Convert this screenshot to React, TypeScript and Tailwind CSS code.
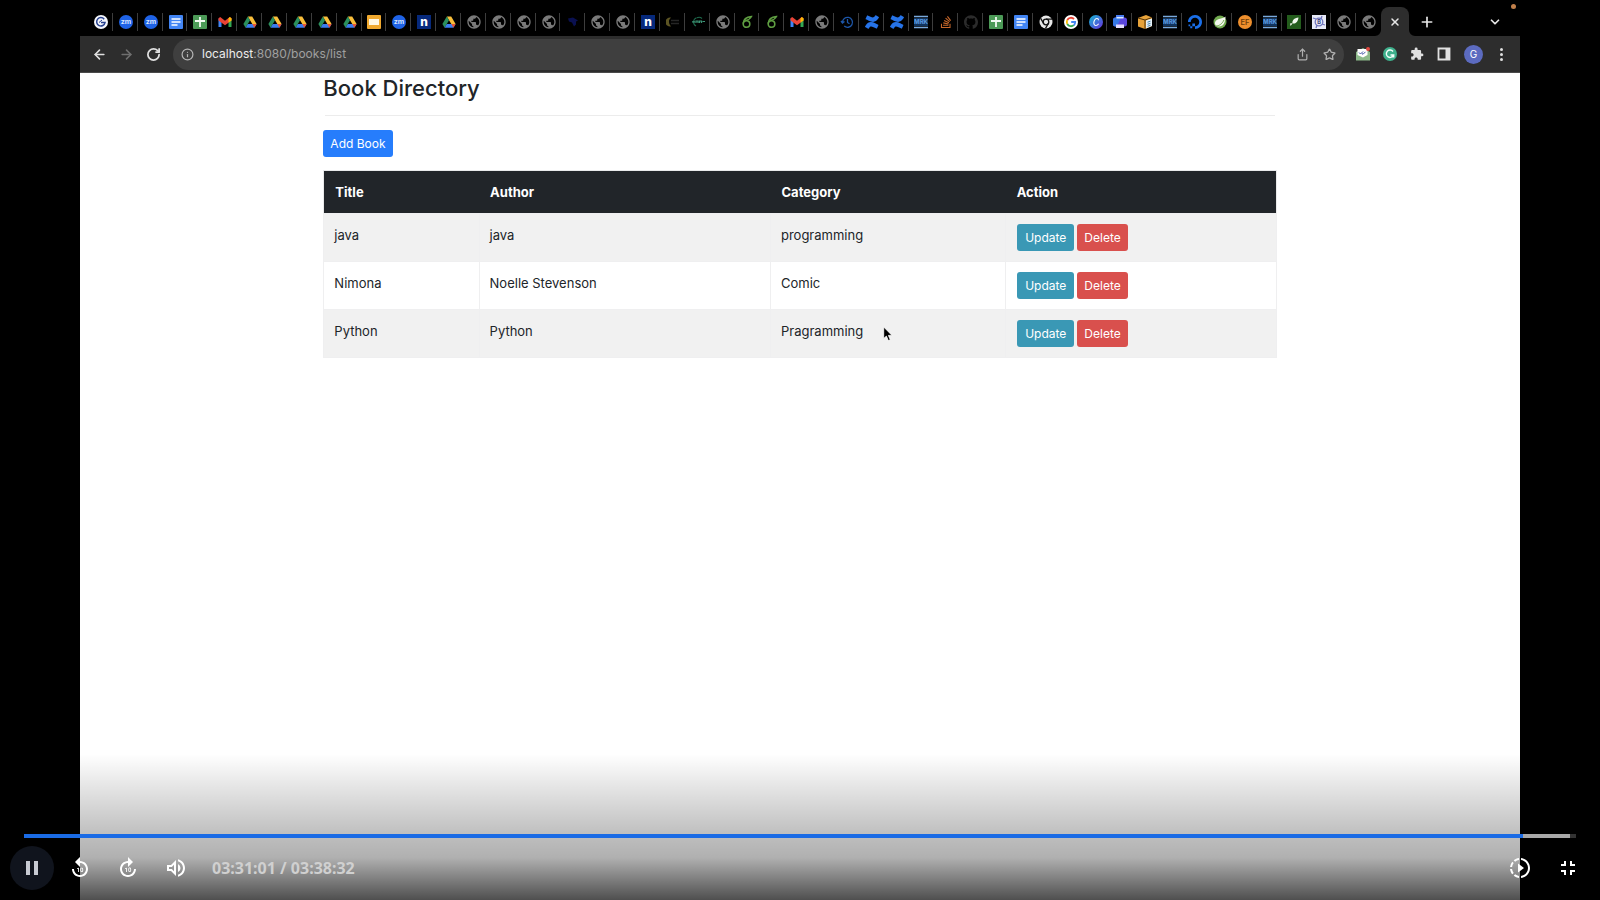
import type { ReactNode } from "react";
import {
  MdExtension,
  MdForward10,
  MdFullscreenExit,
  MdOutlineVolumeUp,
  MdPause,
  MdPublic,
  MdReplay10,
  MdSlowMotionVideo,
} from "react-icons/md";
import {
  ArrowLeft,
  ArrowRight,
  ChevronDown,
  Info,
  Plus,
  RotateCw,
  Share,
  Star,
  X,
} from "lucide-react";
import { SiConfluence, SiGithub, SiStackoverflow, SiDigitalocean } from "react-icons/si";

const glyphText = { fontFamily: "Inter, sans-serif" };

function Svg({ children }: { children: ReactNode }) {
  return (
    <svg viewBox="0 0 14 14" className="size-3.5" aria-hidden="true">
      {children}
    </svg>
  );
}

const icons: Record<string, ReactNode> = {
  grammar: (
    <Svg>
      <circle cx="7" cy="7" r="7" fill="#f4f6fb" />
      <path d="M10.2 4.2A4.2 4.2 0 1 0 11 7.6H7" fill="none" stroke="#27408f" strokeWidth="1.5" />
      <path d="M5 7.5L8 5" stroke="#27408f" strokeWidth="1" />
    </Svg>
  ),
  zoom: (
    <Svg>
      <circle cx="7" cy="7" r="7" fill="#1f63e6" />
      <text x="7" y="9.3" textAnchor="middle" fontSize="7" fontWeight="700" fill="#d9e6ff" style={glyphText}>zm</text>
    </Svg>
  ),
  docs: (
    <Svg>
      <rect width="14" height="14" rx="1" fill="#4285f4" />
      <path d="M2.5 4h9M2.5 7h9M2.5 10h6" stroke="#fff" strokeWidth="1.5" />
    </Svg>
  ),
  sheets: (
    <Svg>
      <rect width="14" height="14" rx="1" fill="#4c9a57" />
      <path d="M7 2v10M2 6h10" stroke="#f2faf2" strokeWidth="1.8" />
    </Svg>
  ),
  gmail: (
    <Svg>
      <path d="M.5 3.500v8.500h3V5.500z" fill="#4285f4" />
      <path d="M13.500 3.500v8.500h-3V5.500z" fill="#34a853" />
      <path d="M.5 3.200L2.200 2 7 5.800 11.800 2l1.700 1.200v2.400L7 10.200.5 5.600z" fill="#ea4335" />
      <path d="M10.500 3.200L11.800 2l1.700 1.200v2.400l-3 2z" fill="#fbbc04" />
    </Svg>
  ),
  drive: (
    <Svg>
      <path d="M4.8 1.5h4.4l4.400 7.600H9.300z" fill="#f9bf3b" />
      <path d="M4.800 1.500L.4 9.100l2.200 3.600L7 5.200z" fill="#2b8f5c" />
      <path d="M2.600 12.700l2.200-3.600h8.800l-2.200 3.600z" fill="#3b7df0" />
      <path d="M9.300 9.100h4.300l-2.200 3.600z" fill="#ea5335" />
    </Svg>
  ),
  slides: (
    <Svg>
      <rect width="14" height="14" rx="1" fill="#f0a92f" />
      <rect x="2" y="4" width="10" height="6" fill="#fff8e4" />
    </Svg>
  ),
  n: (
    <Svg>
      <rect width="14" height="14" fill="#06297c" />
      <text x="7" y="11" textAnchor="middle" fontSize="12" fontWeight="800" fill="#fff" style={glyphText}>n</text>
    </Svg>
  ),
  globe: <MdPublic className="size-4 text-[#7a7a7a]" />,
  navy: (
    <Svg>
      <path d="M2 3.500l5-1 5 3-2 1v3l-2 2-2-4-3-1z" fill="#0a1050" />
    </Svg>
  ),
  moon: (
    <Svg>
      <path d="M5 2.500a4.600 4.600 0 1 0 0 9 6 6 0 0 1 0-9z" fill="#5c5423" />
      <path d="M5 5.500h8M5 8.500h8" stroke="#262626" strokeWidth="1.500" />
    </Svg>
  ),
  teal: (
    <Svg>
      <path d="M5.500 2.800A4.500 4.500 0 0 0 5 11M11 3.500A4.500 4.500 0 0 0 6 2.700" fill="none" stroke="#1e6a4c" strokeWidth="1.100" />
      <path d="M1 6.800h3M5 8V6h2v2M8.500 8V6h2v2M11.500 6.500H14" fill="none" stroke="#3d9576" strokeWidth="1.200" />
    </Svg>
  ),
  six: (
    <Svg>
      <circle cx="6.500" cy="9" r="3.300" fill="none" stroke="#5f9f42" strokeWidth="1.600" />
      <path d="M3.200 8.500C3.300 5 6 2 11.500 1.500 10 4.500 8 5 5.500 5.500" fill="none" stroke="#5f9f42" strokeWidth="1.400" />
    </Svg>
  ),
  history: (
    <Svg>
      <path d="M1 6l1.500 2L4.500 6.500M2.500 7.500a5 5 0 1 1 1.700 3.600M7.500 4v3.500l2 1.300" fill="none" stroke="#1d56a8" strokeWidth="1.300" />
    </Svg>
  ),
  confluence: <SiConfluence className="size-3.5 text-[#2673e8]" />,
  mdn: (
    <Svg>
      <path d="M0 1.500h14M0 12.500h14" stroke="#79a9dc" strokeWidth="1.500" />
      <rect y="3" width="14" height="8" fill="#10345f" />
      <text x="7" y="9.200" textAnchor="middle" fontSize="6" fontWeight="800" fill="#5795dc" style={glyphText}>MRK</text>
    </Svg>
  ),
  stack: <SiStackoverflow className="size-3 text-[#c9682b]" />,
  github: <SiGithub className="size-3.5 text-[#2b2b2b]" />,
  chrome: (
    <Svg>
      <circle cx="7" cy="7" r="6.500" fill="#e8e8e8" />
      <circle cx="7" cy="7" r="2.800" fill="#e8e8e8" stroke="#111" strokeWidth="1.300" />
      <path d="M7 4.200h6M4.600 8.400L1.700 3.400M9.400 8.400L6.500 13.400" stroke="#111" strokeWidth="1.300" />
    </Svg>
  ),
  google: (
    <Svg>
      <circle cx="7" cy="7" r="7" fill="#fff" />
      <g fill="none" strokeWidth="1.800">
        <path d="M10 4A4.200 4.200 0 0 0 3.300 5" stroke="#ea4335" />
        <path d="M3.300 5a4.200 4.200 0 0 0 0 4" stroke="#fbbc04" />
        <path d="M3.300 9a4.200 4.200 0 0 0 6.500 1.200" stroke="#34a853" />
        <path d="M9.800 10.200A4 4 0 0 0 11.200 7H7.200" stroke="#4285f4" />
      </g>
    </Svg>
  ),
  canva: (
    <svg viewBox="0 0 14 14" className="size-3.5" aria-hidden="true">
      <defs>
        <linearGradient id="canva" x1="0" y1="0" x2="1" y2="1">
          <stop offset="0" stopColor="#12b8d0" />
          <stop offset="1" stopColor="#6a2fe0" />
        </linearGradient>
      </defs>
      <circle cx="7" cy="7" r="7" fill="url(#canva)" />
      <path d="M9.500 5.200C9.500 3 6.800 3 5.500 5.200 4 8 5 10.500 6.800 10.500c1.200 0 2.200-.8 2.800-1.800" fill="none" stroke="#fff" strokeWidth="1.100" />
    </svg>
  ),
  printer: (
    <Svg>
      <path d="M3 0h8v4H3z" fill="#4a7df0" />
      <rect y="2.500" width="14" height="9" rx="2.500" fill="#5a46dd" />
      <path d="M0 5a2.500 2.500 0 0 1 2.500-2.500H8L4 11.500H2.500A2.500 2.500 0 0 1 0 9z" fill="#3678e6" />
      <rect x="3.500" y="2" width="7" height="1.500" fill="#dbe9ff" />
      <path d="M3 9.500h8V13H3z" fill="#e4ddff" />
    </Svg>
  ),
  box: (
    <Svg>
      <path d="M0 3l8-3 6 2.500V11l-7 3-7-2.500z" fill="#e8a33a" />
      <path d="M0 3l7 2 7-2.500" fill="none" stroke="#523309" strokeWidth="1" />
      <path d="M7 5v9" stroke="#523309" strokeWidth="1" />
      <path d="M8 5.500l6-2V11l-6 2.500z" fill="#e8f3fa" />
      <path d="M9.500 7.200l3-1M9.500 9.300l3-1M9.500 11.300l3-1" stroke="#4681a8" strokeWidth="1" />
    </Svg>
  ),
  ocean: <SiDigitalocean className="size-3.5 text-[#1a6fe8]" />,
  spring: (
    <Svg>
      <circle cx="7" cy="7" r="6.500" fill="#70a84e" />
      <path d="M12.500 1.500C11 4 3 3 2 7.500c-.4 2.500 1.500 4 4 4 4.500 0 6.500-4 6.500-10z" fill="#f2f7ec" />
      <path d="M3 11c3 0 6-2 8-6" fill="none" stroke="#70a84e" strokeWidth="1" />
    </Svg>
  ),
  ef: (
    <Svg>
      <circle cx="7" cy="7" r="7" fill="#ee8f2d" />
      <text x="7" y="9.800" textAnchor="middle" fontSize="7.500" fontWeight="600" fill="#6e3e09" style={glyphText}>EF</text>
    </Svg>
  ),
  leaf: (
    <Svg>
      <rect width="14" height="14" fill="#235c1c" />
      <path d="M11.500 2.500C7 3 5 5.500 5.500 8.500 9 9 11 6.500 11.500 2.500zM6 8l-2.500 3L3 8.500z" fill="#f2f8ef" />
    </Svg>
  ),
  swirl: (
    <Svg>
      <rect width="14" height="14" fill="#e6e9f6" />
      <circle cx="7" cy="7" r="3.800" fill="none" stroke="#6f74bd" strokeWidth="1.300" />
      <path d="M1 3l3 1M10 1L9 4M13 10l-3-1M4 13l1-3" stroke="#6f74bd" strokeWidth="1.300" />
      <text x="7" y="9" textAnchor="middle" fontSize="5.500" fontWeight="700" fill="#383c77" style={glyphText}>B</text>
    </Svg>
  ),
};

const tabs =
  "grammar zoom zoom docs sheets gmail drive drive drive drive drive slides zoom n drive globe globe globe globe navy globe globe n moon teal globe six six gmail globe history confluence confluence mdn stack github sheets docs chrome google canva printer box mdn ocean spring ef mdn leaf swirl globe globe".split(
    " ",
  );

function TabStrip() {
  return (
    <div className="flex h-9 items-end bg-black pl-2">
      <div className="grid w-[1293px] grid-cols-[repeat(52,minmax(0,1fr))] pb-[5px]">
        {tabs.map((name, i) => (
          <button
            key={i}
            aria-label={name}
            className={
              i < tabs.length - 1
                ? "flex h-[18px] items-center justify-center border-r border-[#3d3d3d] pl-0.5"
                : "flex h-[18px] items-center justify-center"
            }
          >
            {icons[name]}
          </button>
        ))}
      </div>
      <div className="relative flex h-[29px] w-7 shrink-0 items-center justify-center rounded-t-lg bg-[#2d2d2d] text-[#e6e6e6]">
        <svg viewBox="0 0 6 6" className="absolute bottom-0 -left-1.5 size-1.5" aria-hidden="true">
          <path d="M6 0v6H0A6 6 0 0 0 6 0z" fill="#2d2d2d" />
        </svg>
        <svg viewBox="0 0 6 6" className="absolute -right-1.5 bottom-0 size-1.5" aria-hidden="true">
          <path d="M0 0v6h6A6 6 0 0 1 0 0z" fill="#2d2d2d" />
        </svg>
        <button aria-label="Close tab">
          <X className="size-3" strokeWidth={3} />
        </button>
      </div>
      <div className="flex h-[29px] flex-1 items-center justify-between pr-[18px] pl-2.5 text-[#e6e6e6]">
        <button aria-label="New tab">
          <Plus className="size-4" strokeWidth={2.5} />
        </button>
        <button aria-label="Search tabs">
          <ChevronDown className="size-3.5" strokeWidth={3} />
        </button>
      </div>
    </div>
  );
}

function Toolbar() {
  return (
    <div className="flex h-[37px] items-center border-b border-[#4a4a4a] bg-[#2d2d2d] pr-3.5 pl-3 text-[#e0e0e0]">
      <div className="flex w-[81px] items-center gap-3">
        <button aria-label="Back">
          <ArrowLeft className="size-[15px]" strokeWidth={2.5} />
        </button>
        <button aria-label="Forward" className="text-[#6f6f6f]">
          <ArrowRight className="size-[15px]" strokeWidth={2.5} />
        </button>
        <button aria-label="Reload">
          <RotateCw className="size-[15px]" strokeWidth={2.8} />
        </button>
      </div>
      <div className="flex h-[31px] flex-1 items-center rounded-full bg-[#3f3f3f] pr-2 pl-2">
        <Info className="size-[13px] text-[#b5b5b5]" strokeWidth={2.2} />
        <div className="flex-1 pl-2 font-[Inter,sans-serif] text-xs leading-5 text-[#a0a0a0]">
          <span className="text-[#ececec]">localhost</span>:8080/books/list
        </div>
        <div className="flex items-center gap-3.5 text-[#b0b0b0]">
          <button aria-label="Share">
            <Share className="size-[13px]" strokeWidth={2.2} />
          </button>
          <button aria-label="Bookmark">
            <Star className="size-[13px]" strokeWidth={2.4} />
          </button>
        </div>
      </div>
      <div className="flex items-center gap-[13px] pl-3">
        <button aria-label="Mail checker">
          <Svg>
            <path d="M0 5l7-4 7 4v8.500H0z" fill="#8cb98a" />
            <path d="M1.500 2h10v6L7 10.500 1.500 8z" fill="#fff" />
            <path d="M3 5.500l1.500 1.500L7 4.500M6 6.500l1 .8 2.500-2.500" fill="none" stroke="#4054a8" strokeWidth="1" />
            <circle cx="12" cy="2" r="2" fill="#df4b43" />
          </Svg>
        </button>
        <button aria-label="Writing assistant">
          <Svg>
            <circle cx="7" cy="7" r="7" fill="#3eb08c" />
            <path d="M10 4.500A3.700 3.700 0 1 0 10.500 8H7.500M10.700 7.500v3" fill="none" stroke="#f2fffa" strokeWidth="1.400" />
          </Svg>
        </button>
        <button aria-label="Extensions">
          <MdExtension className="size-3.5" />
        </button>
        <button aria-label="Side panel">
          <Svg>
            <path d="M1.500 1.500h11v11h-11z" fill="none" stroke="#e0e0e0" strokeWidth="1.800" />
            <path d="M8.500 1.500h4v11h-4z" fill="#e0e0e0" />
          </Svg>
        </button>
        <button className="flex size-[19px] items-center justify-center rounded-full bg-[#5c6bc0] font-[Inter,sans-serif] text-[10px] text-white">
          G
        </button>
        <button aria-label="Menu" className="flex w-2.5 flex-col items-center gap-0.5">
          <i className="size-[3px] rounded-full bg-[#e0e0e0]" />
          <i className="size-[3px] rounded-full bg-[#e0e0e0]" />
          <i className="size-[3px] rounded-full bg-[#e0e0e0]" />
        </button>
      </div>
    </div>
  );
}

const books = [
  { title: "java", author: "java", category: "programming" },
  { title: "Nimona", author: "Noelle Stevenson", category: "Comic" },
  { title: "Python", author: "Python", category: "Pragramming" },
];

function BookPage() {
  return (
    <main className="relative w-full flex-1 bg-white px-[16.9%] font-[Inter,sans-serif] text-[#212529]">
      <h1 className="text-[22px] leading-[30px] font-medium">Book Directory</h1>
      <hr className="mx-0.5 mt-3 border-[#ececec]" />
      <button className="mt-3.5 block h-[27px] rounded-[3px] bg-[#267dfc] px-[7px] text-xs text-white">
        Add Book
      </button>
      <table className="mt-[13px] w-full table-fixed border-collapse border border-[#e9eaeb] text-left text-[13px] leading-5">
        <colgroup>
          <col className="w-[16.3%]" />
          <col className="w-[30.6%]" />
          <col className="w-[24.7%]" />
          <col />
        </colgroup>
        <thead>
          <tr className="h-[43px] bg-[#212529] text-white">
            {["Title", "Author", "Category", "Action"].map((h) => (
              <th key={h} className="px-[11px] font-bold">
                {h}
              </th>
            ))}
          </tr>
        </thead>
        <tbody>
          {books.map((b) => (
            <tr key={b.title} className="h-12 align-top odd:bg-[#f1f1f1]">
              <td className="border border-[#efeff0] px-2.5 pt-[11px]">{b.title}</td>
              <td className="border border-[#efeff0] px-2.5 pt-[11px]">{b.author}</td>
              <td className="border border-[#efeff0] px-2.5 pt-[11px]">{b.category}</td>
              <td className="border border-[#efeff0] px-[11px] pt-2.5">
                <div className="flex gap-[3px]">
                  <button className="h-[27px] rounded-[3px] bg-[#3a98b5] px-2 text-xs text-white">Update</button>
                  <button className="h-[27px] rounded-[3px] bg-[#d9504d] px-[7px] text-xs text-white">Delete</button>
                </div>
              </td>
            </tr>
          ))}
        </tbody>
      </table>
      <svg viewBox="0 0 10 16" className="absolute top-[253px] left-[803px] h-4 w-2.5" aria-hidden="true">
        <path d="M.7 1v11.500l2.700-2.400 1.900 4.500 2-.9-1.900-4.300H9z" fill="#000" stroke="#fff" strokeWidth=".8" />
      </svg>
    </main>
  );
}

function PlayerControls() {
  return (
    <div className="absolute inset-x-0 bottom-0 flex h-[146px] flex-col justify-end bg-[linear-gradient(to_bottom,transparent_0%,rgba(0,0,0,0.25)_55%,rgba(0,0,0,0.31)_71%,rgba(0,0,0,0.69)_100%)]">
      <div
        role="progressbar"
        aria-label="Playback position"
        aria-valuenow={97}
        className="mx-6 flex h-1 bg-[#333]"
      >
        <div className="w-[96.6%] bg-[#1a6be5]" />
        <div className="w-[3%] bg-[#a8a8a8]" />
      </div>
      <div className="flex h-[62px] items-center px-5 pb-0.5 text-white">
        <div className="-ml-2.5 flex items-center">
          <button
            aria-label="Pause"
            className="flex size-11 items-center justify-center rounded-full bg-[#10141d] text-[#c8cad2]"
          >
            <MdPause className="size-6" />
          </button>
          <div className="flex items-center gap-6 pl-3.5">
            <button aria-label="Back 10 seconds">
              <MdReplay10 className="size-6" />
            </button>
            <button aria-label="Forward 10 seconds">
              <MdForward10 className="size-6" />
            </button>
            <button aria-label="Volume">
              <MdOutlineVolumeUp className="size-6" />
            </button>
            <span className="font-['Noto_Sans',sans-serif] text-base leading-6 font-bold text-[#d0d0d0]">
              03:31:01 / 03:38:32
            </span>
          </div>
        </div>
        <div className="ml-auto flex gap-6">
          <button aria-label="Playback speed">
            <MdSlowMotionVideo className="size-6" />
          </button>
          <button aria-label="Exit full screen">
            <MdFullscreenExit className="size-6" />
          </button>
        </div>
      </div>
    </div>
  );
}

export default function App() {
  return (
    <div className="relative flex h-screen flex-col overflow-hidden bg-black">
      <div className="mx-[5%] flex flex-1 flex-col">
        <TabStrip />
        <Toolbar />
        <BookPage />
      </div>
      <i className="absolute top-1 right-[84px] size-[5px] rounded-full bg-[#c07f4a]" />
      <PlayerControls />
    </div>
  );
}
